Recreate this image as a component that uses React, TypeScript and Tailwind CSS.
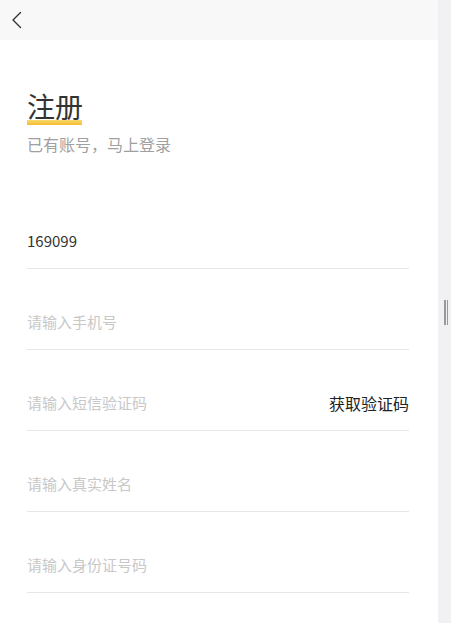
import React, { useState } from 'react'

const font = { fontFamily: '"Noto Sans CJK SC", "Noto Sans", sans-serif' }

const Field: React.FC<{
  placeholder: string
  value?: string
  extra?: React.ReactNode
}> = ({ placeholder, value, extra }) => {
  const [v, setV] = useState(value ?? '')
  return (
    <div className="flex h-[81px] items-end border-b border-[#e6e6e6] pb-[16px]">
      <input
        value={v}
        onChange={(e) => setV(e.target.value)}
        placeholder={placeholder}
        className="h-[22px] min-w-0 flex-1 bg-transparent text-[15px] leading-[22px] text-[#333] outline-none placeholder:text-[#c8c8c8]"
        style={font}
      />
      {extra}
    </div>
  )
}

export default function App() {
  return (
    <div className="flex h-[623px] w-[451px] overflow-hidden bg-white" style={font}>
      <div className="flex w-[438px] flex-col">
        {/* top bar */}
        <div className="flex h-10 items-center bg-[#f8f8f8] pl-[10px]">
          <svg width="14" height="18" viewBox="0 0 14 18" fill="none">
            <path d="M10.5 1.5 3 9l7.5 7.5" stroke="#333" strokeWidth="1.4" strokeLinecap="round" strokeLinejoin="round" />
          </svg>
        </div>

        <div className="pl-[27px] pr-[29px]">
          {/* heading */}
          <div className="mt-[49px] flex flex-col items-start">
            <h1 className="text-[28px] leading-[34px] font-normal text-[#333]">注册</h1>
            <div className="-mt-[3px] h-[5px] w-[55px] bg-[linear-gradient(to_bottom,#fbd76e,#f5bd2e)]" />
            <p className="mt-[8px] text-[16px] leading-[22px] text-[#a0a0a0]">已有账号，马上登录</p>
          </div>

          {/* form */}
          <div className="mt-[33px] flex flex-col">
            <Field placeholder="请输入账号" value="169099" />
            <Field placeholder="请输入手机号" />
            <Field
              placeholder="请输入短信验证码"
              extra={
                <button className="h-[22px] shrink-0 text-[16px] leading-[22px] text-[#222]" style={font}>
                  获取验证码
                </button>
              }
            />
            <Field placeholder="请输入真实姓名" />
            <Field placeholder="请输入身份证号码" />
          </div>
        </div>
      </div>

      {/* side strip */}
      <div className="flex w-[13px] flex-col items-center bg-[#f1f1f3] pt-[300px]">
        <div className="flex h-[25px] gap-[1px] pl-[3px]">
          <div className="w-[1.5px] bg-[#999]" />
          <div className="w-[1.5px] bg-[#999]" />
        </div>
      </div>
    </div>
  )
}
